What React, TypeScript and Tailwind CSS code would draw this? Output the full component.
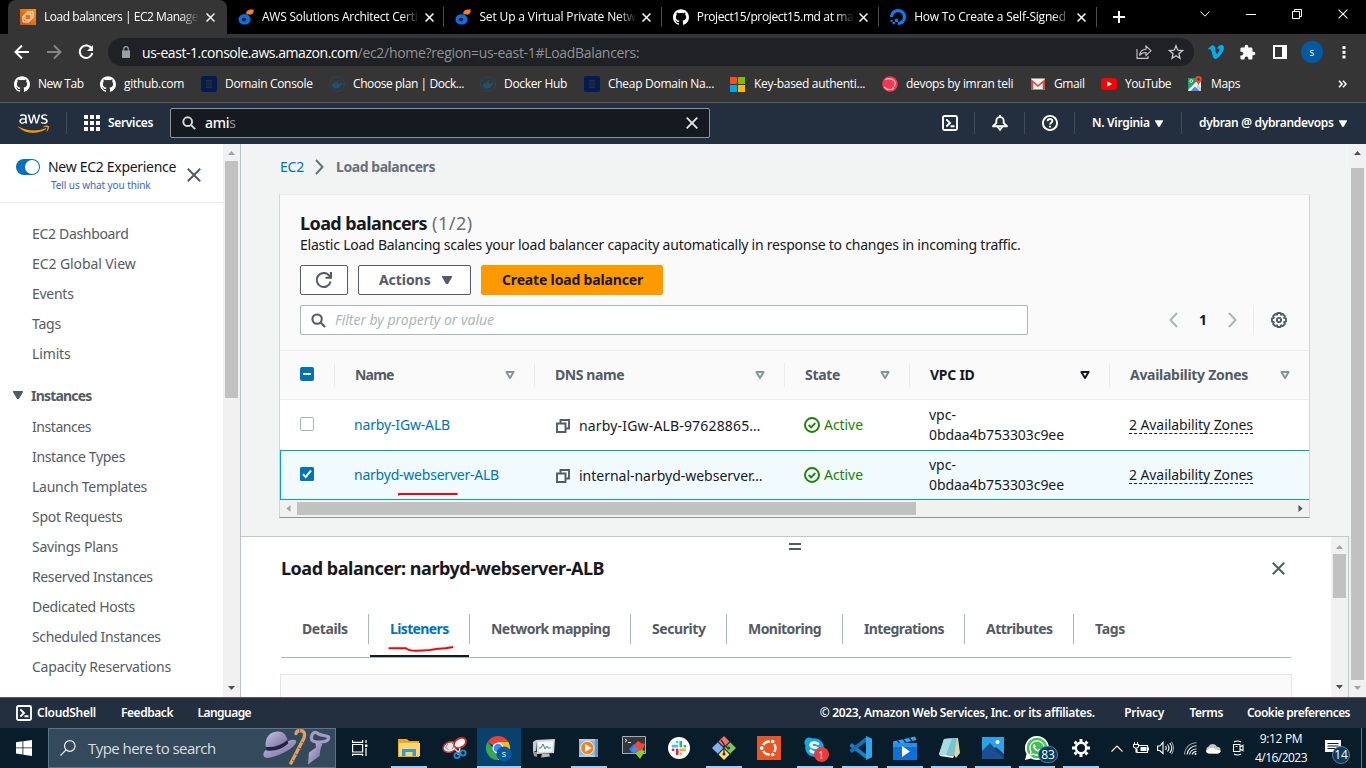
import { useLayoutEffect, useRef, type ReactNode } from "react";
import { SiGithub, SiDigitalocean, SiVimeo, SiDocker } from "react-icons/si";
import { FaAws, FaSkype, FaWhatsapp } from "react-icons/fa";
import { MdExtension } from "react-icons/md";

/* Text set to a fixed measure: the tracking is worked out from the natural width. */
function Fit({ w, className = "", children }: { w: number; className?: string; children: ReactNode }) {
  const ref = useRef<HTMLSpanElement>(null);
  useLayoutEffect(() => {
    const el = ref.current;
    if (!el) return;
    el.style.letterSpacing = "0px";
    const natural = el.getBoundingClientRect().width;
    const count = (el.textContent ?? "").length || 1;
    el.style.letterSpacing = `${(w - 0.4 - natural) / count}px`;
  }, [w]);
  return (
    <span ref={ref} className={`inline-block shrink-0 whitespace-nowrap ${className}`}>
      {children}
    </span>
  );
}

/* ---------- small glyphs ---------- */

function Cross({ className }: { className: string }) {
  return (
    <svg viewBox="0 0 12 12" className={`shrink-0 ${className}`} fill="none" stroke="currentColor">
      <path d="M.7.7l10.6 10.6M11.3.7L.7 11.3" />
    </svg>
  );
}

function Caret({ className }: { className: string }) {
  return (
    <svg viewBox="0 0 10 8" className={`shrink-0 ${className}`} fill="currentColor">
      <path d="M0 0h10v1L6 8H4L0 1z" />
    </svg>
  );
}

function SortCaret({ className }: { className: string }) {
  return (
    <svg viewBox="0 0 10 8" className={`h-2 w-2.5 shrink-0 ${className}`} fill="none" stroke="currentColor" strokeWidth="2">
      <path d="M1.4 1h7.2L5 7z" strokeLinejoin="round" />
    </svg>
  );
}

function Magnifier({ className }: { className: string }) {
  return (
    <svg viewBox="0 0 16 16" className={`shrink-0 ${className}`} fill="none" stroke="currentColor" strokeWidth="2.2">
      <circle cx="6.5" cy="6.5" r="5" />
      <path d="M10.2 10.2L15 15" />
    </svg>
  );
}

function ShellIcon() {
  return (
    <svg viewBox="0 0 16 16" className="size-4 shrink-0" fill="none" stroke="currentColor" strokeWidth="1.9">
      <rect x="1" y="1" width="14" height="14" rx="1.5" />
      <path d="M4.3 4.3L8 8l-3.7 3.5M8.5 11.3h4" />
    </svg>
  );
}

function Arrow({ dir, className }: { dir: "up" | "down" | "left" | "right"; className: string }) {
  const d = {
    up: "M0 6L3.5 2L7 6z",
    down: "M0 1h7L3.5 5z",
    left: "M5.5 0v7L1.500 3.5z",
    right: "M1.5 0v7L5.500 3.5z",
  }[dir];
  return (
    <svg viewBox="0 0 7 7" className={`size-[7px] shrink-0 ${className}`} fill="currentColor">
      <path d={d} />
    </svg>
  );
}

/* ---------- browser chrome ---------- */

function Ec2Fav() {
  return (
    <svg viewBox="0 0 16 16" className="size-4 shrink-0">
      <defs>
        <linearGradient id="ec2" x1="0" y1="1" x2="1" y2="0">
          <stop offset="0" stopColor="#c85412" />
          <stop offset="1" stopColor="#fc9415" />
        </linearGradient>
      </defs>
      <path d="M0 0h16v16H0z" fill="url(#ec2)" />
      <path d="M7 4.5V3h6v6h-1.500M5 5h6v6H5zM5 7H3v6h6v-2" fill="none" stroke="#fff" strokeWidth=".9" />
    </svg>
  );
}

function DropFav() {
  return (
    <svg viewBox="0 0 16 16" className="size-4 shrink-0">
      <path d="M6.500 5.200c3.400 0 6 2.200 6 5.200s-2.600 5.200-6 5.200S.5 13.400.5 10.400s2.600-5.200 6-5.200z" fill="#0b6fe0" />
      <ellipse cx="6" cy="10.600" rx="2.200" ry="1.800" fill="#02142d" />
      <path d="M8.300 5.200C7.800 2 10 .1 15.700.6c.2 3.800-1.400 5.300-4 5z" fill="#ff7a29" />
    </svg>
  );
}

const fade = "overflow-hidden [mask-image:linear-gradient(to_right,#000_88%,transparent)]";

function BrowserTab({ icon, title, w }: { icon: ReactNode; title: string; w: number }) {
  return (
    <div className="flex h-5 w-[217.400px] shrink-0 items-center border-r border-[#4c4c4c] pl-[11px]">
      {icon}
      <div className={`ml-2 w-[158px] text-white ${fade}`}>
        <Fit w={w}>{title}</Fit>
      </div>
      <Cross className="ml-[4.500px] size-[9px] stroke-2 text-white" />
    </div>
  );
}

function TabStrip() {
  return (
    <div className="flex h-[34px] items-start bg-black pl-2 text-[12px]">
      <div className="flex h-[34px] w-[219px] shrink-0 items-center rounded-t-lg bg-[#353535] pl-3">
        <Ec2Fav />
        <div className={`ml-2 w-[155px] text-white ${fade}`}>
          <Fit w={154.5}>Load balancers | EC2 Manage</Fit>
        </div>
        <Cross className="ml-[7px] size-[9px] stroke-2 text-white" />
      </div>
      <div className="flex h-[34px] items-center">
        <BrowserTab icon={<DropFav />} title="AWS Solutions Architect Certi" w={156} />
        <BrowserTab icon={<DropFav />} title="Set Up a Virtual Private Netw" w={157} />
        <BrowserTab icon={<SiGithub className="size-4 shrink-0 text-white" />} title="Project15/project15.md at ma" w={157} />
        <BrowserTab icon={<SiDigitalocean className="size-4 shrink-0 text-[#0080ff]" />} title="How To Create a Self-Signed" w={152} />
      </div>
      <div className="flex h-[34px] items-center pl-4 text-white">
        <svg viewBox="0 0 12 12" className="size-3" stroke="currentColor" strokeWidth="2">
          <path d="M6 0v12M0 6h12" />
        </svg>
      </div>
      <div className="ml-[75px] flex h-7 items-center text-white">
        <svg viewBox="0 0 10 6" className="h-1.5 w-2.5" fill="none" stroke="currentColor">
          <path d="M.4.5L5 5.200 9.600.5" />
        </svg>
        <div className="ml-9 h-px w-2.5 bg-white" />
        <svg viewBox="0 0 10 10" className="ml-[36px] size-2.5" fill="none" stroke="currentColor">
          <path d="M.5 2.500h7v7h-7zM2.500 2.500v-2h7v7h-2" />
        </svg>
        <Cross className="ml-[36px] size-2.5 [stroke-width:1.3]" />
      </div>
    </div>
  );
}

function Toolbar() {
  return (
    <div className="flex h-9 items-center bg-[#353535] pl-[14px] text-white">
      <svg viewBox="0 0 16 16" className="size-4" fill="none" stroke="currentColor" strokeWidth="2">
        <path d="M15 8H2M8 1.500L1.500 8 8 14.500" />
      </svg>
      <svg viewBox="0 0 16 16" className="ml-4 size-4 text-[#858585]" fill="none" stroke="currentColor" strokeWidth="2">
        <path d="M1 8h13M8 1.500L14.500 8 8 14.500" />
      </svg>
      <svg viewBox="0 0 16 16" className="ml-4 size-4" fill="none" stroke="currentColor" strokeWidth="2">
        <path d="M13.800 5A6.300 6.300 0 1 0 14.300 9" />
        <path d="M15 1v6H9z" fill="currentColor" stroke="none" />
      </svg>
      <div className="ml-[14px] flex h-7 w-[1086px] items-center rounded-full bg-[#202124] pl-[14px]">
        <svg viewBox="0 0 8 12" className="h-3 w-2" fill="#9aa0a6">
          <path d="M0 4.500h8V11q0 1-1 1H1q-1 0-1-1z" />
          <path d="M1.700 5V3a2.300 2.300 0 0 1 4.600 0v2" fill="none" stroke="#9aa0a6" strokeWidth="1.200" />
        </svg>
        <div className="ml-3 text-[14px]">
          <Fit w={216}>us-east-1.console.aws.amazon.com</Fit>
          <Fit w={282} className="text-[#8f9296]">/ec2/home?region=us-east-1#LoadBalancers:</Fit>
        </div>
        <svg viewBox="0 0 16 14" className="ml-auto h-[14px] w-4 text-[#c8c8c8]" fill="none" stroke="currentColor" strokeWidth="1.100">
          <path d="M1 4v9.400h11V11" />
          <path d="M3.500 10.500C4 6.500 6.500 4.300 10 4.200V1l5 4.800-5 4.700V7.500C7 7.400 5 8.300 3.500 10.500z" />
        </svg>
        <svg viewBox="0 0 16 16" className="mr-[10px] ml-4 size-4 text-[#c8c8c8]" fill="none" stroke="currentColor" strokeWidth="1.300">
          <path d="M8 1.800l1.800 4.400 4.700.4-3.600 3.100 1.100 4.600L8 11.800l-4 2.500 1.100-4.600L1.500 6.600l4.700-.4z" />
        </svg>
      </div>
      <SiVimeo className="ml-[14px] size-4 text-[#00adef]" />
      <MdExtension className="ml-[15px] size-[17px]" />
      <svg viewBox="0 0 14 14" className="ml-[17px] size-[14px]" fill="currentColor">
        <path fillRule="evenodd" d="M0 0h14v14H0zM2 2v10h7V2z" />
      </svg>
      <div className="ml-[14px] flex size-[22px] items-center justify-center rounded-full bg-[#0559a1] text-[10px]">s</div>
      <svg viewBox="0 0 4 14" className="ml-[19px] h-[14px] w-1" fill="currentColor">
        <path d="M.5 1h3v3h-3zM.5 5.700h3v3h-3zM.5 10.400h3v3h-3z" />
      </svg>
    </div>
  );
}

function DomainIcon() {
  return (
    <svg viewBox="0 0 16 16" className="size-4 shrink-0">
      <rect width="16" height="16" rx="2" fill="#041b50" />
      <path d="M5 4h6v8H5z" fill="#222f4c" />
      <path d="M4.500 6h7M4.500 8h7M4.500 10h7M6 3h4M6 13h4" stroke="#101d3c" />
    </svg>
  );
}

function DockerIcon() {
  return (
    <div className="flex size-4 shrink-0 items-center justify-center rounded-full border border-[#26475a]">
      <SiDocker className="size-[11px] text-[#1d5470]" />
    </div>
  );
}

function BookmarksBar() {
  return (
    <div className="flex h-[33px] items-center border-b border-[#5c5c5c] bg-[#353535] pb-1 pl-[14px] text-[12px] text-white">
      <div className="flex w-[86px] items-center gap-2">
        <SiGithub className="size-4 shrink-0" />
        <Fit w={46}>New Tab</Fit>
      </div>
      <div className="flex w-[101px] items-center gap-2">
        <SiGithub className="size-4 shrink-0" />
        <Fit w={60.5}>github.com</Fit>
      </div>
      <div className="flex w-32 items-center gap-2">
        <DomainIcon />
        <Fit w={88}>Domain Console</Fit>
      </div>
      <div className="flex w-[151px] items-center gap-2">
        <DockerIcon />
        <Fit w={111.5}>Choose plan | Dock...</Fit>
      </div>
      <div className="flex w-[104px] items-center gap-2">
        <DockerIcon />
        <Fit w={63.500}>Docker Hub</Fit>
      </div>
      <div className="flex w-[146px] items-center gap-2">
        <DomainIcon />
        <Fit w={106.500}>Cheap Domain Na...</Fit>
      </div>
      <div className="flex w-[152px] items-center gap-2">
        <svg viewBox="0 0 15 15" className="mr-px size-[15px] shrink-0">
          <path d="M0 0h7v7H0z" fill="#f25022" />
          <path d="M8 0h7v7H8z" fill="#7fba00" />
          <path d="M0 8h7v7H0z" fill="#00a4ef" />
          <path d="M8 8h7v7H8z" fill="#ffb900" />
        </svg>
        <Fit w={111.500}>Key-based authenti...</Fit>
      </div>
      <div className="flex w-[148px] items-center gap-2">
        <svg viewBox="0 0 16 16" className="size-4 shrink-0">
          <circle cx="8" cy="8" r="7.800" fill="#ee3a55" />
          <path d="M3 3.500q6-2 9.500 1.500 2 4-2 7.500M2 11q4 4.500 10 1.500" stroke="#f8a5b0" strokeWidth="1.300" fill="none" />
        </svg>
        <Fit w={107.500}>devops by imran teli</Fit>
      </div>
      <div className="flex w-[71px] items-center gap-2">
        <svg viewBox="0 0 16 16" className="size-4 shrink-0">
          <path d="M1 2.500h14v11H1z" fill="#f2f2f2" />
          <path d="M1 13.500V3l7 6 7-6v10.500h-2.200V7L8 11 3.200 7v6.500z" fill="#d54b3d" />
        </svg>
        <Fit w={31}>Gmail</Fit>
      </div>
      <div className="flex w-[86px] items-center gap-2">
        <svg viewBox="0 0 16 16" className="size-4 shrink-0">
          <rect y="2" width="16" height="12" rx="3" fill="#f00" />
          <path d="M6.300 5.300L11 8l-4.700 2.700z" fill="#fff" />
        </svg>
        <Fit w={46.5}>YouTube</Fit>
      </div>
      <div className="flex items-center gap-2">
        <svg viewBox="0 0 16 16" className="size-4 shrink-0">
          <path d="M1 2h13v13H1z" fill="#e6e6e6" />
          <path d="M1 2h9v5L1 15z" fill="#1fa463" />
          <path d="M1 14L11 4l3 3v8H1z" fill="#f5f5f5" />
          <path d="M3.500 15L8 10.500l4.500 4.500z" fill="#4889f4" />
          <path d="M11 9l3 3v3h-1L9.500 11z" fill="#c9c9c9" />
          <circle cx="4.300" cy="5" r="1.400" fill="none" stroke="#e8f5ee" strokeWidth=".9" />
          <path d="M11.500 0A3.300 3.300 0 0 1 14.800 3.400C14.800 6 11.800 6 11.500 10 11.200 6 8.200 6 8.200 3.400A3.300 3.300 0 0 1 11.500 0z" fill="#dc4b3e" />
          <circle cx="11.500" cy="3.300" r="1.200" fill="#7c221b" />
        </svg>
        <Fit w={29.500}>Maps</Fit>
      </div>
      <svg viewBox="0 0 9 8" className="ml-auto mr-[19px] h-2 w-[9px]" fill="none" stroke="currentColor" strokeWidth="1.600">
        <path d="M1 .8L4 4 1 7.200M5 .8L8 4 5 7.200" />
      </svg>
    </div>
  );
}

/* ---------- console header and footer ---------- */

function ConsoleHeader() {
  return (
    <div className="flex h-[41px] items-center bg-[#232f3e] pb-px pl-[18px] text-[12px] font-semibold text-white">
      <svg className="absolute size-0">
        <defs>
          <linearGradient id="aws" x1="0" y1="0" x2="0" y2="1">
            <stop offset=".61" stopColor="#fff" />
            <stop offset=".61" stopColor="#ff9900" />
          </linearGradient>
        </defs>
      </svg>
      <FaAws className="h-[25px] w-[31px] shrink-0 fill-[url(#aws)]" />
      <div className="ml-[17px] h-[22px] w-px bg-[#414d5c]" />
      <svg viewBox="0 0 16 16" className="ml-[17px] size-4" fill="currentColor">
        <path d="M0 0h4v4H0zM6 0h4v4H6zM12 0h4v4h-4zM0 6h4v4H0zM6 6h4v4H6zM12 6h4v4h-4zM0 12h4v4H0zM6 12h4v4H6zM12 12h4v4h-4z" />
      </svg>
      <Fit w={45.500} className="ml-2">Services</Fit>
      <div className="ml-[16.500px] flex h-[30px] w-[540px] items-center rounded-xs border border-[#879596] bg-[#16191f] pl-[11px] text-[14px] font-medium">
        <Magnifier className="size-3.5 text-[#d5dbdb]" />
        <Fit w={31} className="mb-px ml-[9.500px]">
          ami<span className="font-normal text-[#879596]">s</span>
        </Fit>
        <Cross className="mr-[11px] ml-auto size-3 text-[#e6eaea] [stroke-width:1.8]" />
      </div>
      <div className="ml-auto flex items-center">
        <ShellIcon />
        <div className="ml-4 h-[22px] w-px bg-[#414d5c]" />
        <svg viewBox="0 0 16 16" className="ml-[17px] size-4" fill="none" stroke="currentColor" strokeWidth="1.900">
          <path d="M8 0v2.200M1 11.200L4.300 8V5.800a3.700 3.700 0 0 1 7.400 0V8l3.300 3.200zM5.500 11.500L8 15l2.500-3.500" strokeLinejoin="round" />
        </svg>
        <div className="ml-4 h-[22px] w-px bg-[#414d5c]" />
        <svg viewBox="0 0 16 16" className="ml-[17px] size-4" fill="none" stroke="currentColor" strokeWidth="1.900">
          <circle cx="8" cy="8" r="7.100" />
          <path d="M5.600 6.300c0-3.200 4.800-3 4.800-.2 0 1.600-2.400 1.700-2.400 3.500M8 10.800v1.700" />
        </svg>
        <div className="ml-4 h-[22px] w-px bg-[#414d5c]" />
        <Fit w={58} className="ml-[17px]">N. Virginia</Fit>
        <Caret className="ml-[5.400px] h-[7px] w-2" />
        <div className="ml-[18px] h-[22px] w-px bg-[#414d5c]" />
        <Fit w={135} className="ml-[17px]">dybran @ dybrandevops</Fit>
        <Caret className="mr-[19px] ml-[5.400px] h-[7px] w-2" />
      </div>
    </div>
  );
}

function ConsoleFooter() {
  return (
    <div className="flex h-[31px] items-center border-t border-[#545b64] bg-[#232f3e] pl-4 text-[12px] font-semibold text-white">
      <ShellIcon />
      <Fit w={59.400} className="ml-[5px]">CloudShell</Fit>
      <Fit w={52.400} className="ml-[25px]">Feedback</Fit>
      <Fit w={54} className="ml-[24.500px]">Language</Fit>
      <div className="ml-auto flex items-center pr-4">
        <Fit w={275.400}>© 2023, Amazon Web Services, Inc. or its affiliates.</Fit>
        <Fit w={40} className="ml-[29.500px]">Privacy</Fit>
        <Fit w={34} className="ml-[25.500px]">Terms</Fit>
        <Fit w={103.400} className="ml-6">Cookie preferences</Fit>
      </div>
    </div>
  );
}

/* ---------- sidebar ---------- */

const topLinks: [string, number][] = [
  ["EC2 Dashboard", 97],
  ["EC2 Global View", 104],
  ["Events", 42],
  ["Tags", 29.4],
  ["Limits", 39],
];

const instanceLinks: [string, number][] = [
  ["Instances", 59.4],
  ["Instance Types", 93.4],
  ["Launch Templates", 115.4],
  ["Spot Requests", 91],
  ["Savings Plans", 86.4],
  ["Reserved Instances", 121],
  ["Dedicated Hosts", 103.4],
  ["Scheduled Instances", 129],
  ["Capacity Reservations", 139.4],
];

function Sidebar() {
  return (
    <div className="flex h-full w-[223px] shrink-0 flex-col bg-white text-[14px] text-[#545b64]">
      <div className="flex h-[59px] shrink-0 items-start border-b border-[#eaeded] pl-4">
        <div className="mt-[15px] flex h-4 w-6 items-center justify-end rounded-full bg-[#0073bb] pr-px">
          <div className="size-3.5 rounded-full bg-white" />
        </div>
        <div className="ml-2 flex w-[139px] flex-col items-start pt-[13px]">
          <Fit w={128.5} className="leading-5 text-[#16191f]">New EC2 Experience</Fit>
          <Fit w={100} className="ml-[3px] text-[10px] leading-4 text-[#3b66be]">Tell us what you think</Fit>
        </div>
        <Cross className="mt-[24px] size-[14px] [stroke-width:1.7]" />
      </div>
      <div className="flex flex-col pt-[15px] pl-8">
        {topLinks.map(([t, w]) => (
          <div key={t} className="flex h-[30px] items-center">
            <Fit w={w}>{t}</Fit>
          </div>
        ))}
      </div>
      <div className="mt-[11px] flex h-8 items-center pl-[13px] font-bold">
        <Caret className="h-2 w-2.5" />
        <Fit w={61} className="ml-2">Instances</Fit>
      </div>
      <div className="flex flex-col pl-8">
        {instanceLinks.map(([t, w]) => (
          <div key={t} className="flex h-[30px] items-center">
            <Fit w={w}>{t}</Fit>
          </div>
        ))}
      </div>
    </div>
  );
}

/* ---------- load balancer table ---------- */

const columns = [
  { title: "Name", w: 39, cell: "w-[200px]", sorted: false },
  { title: "DNS name", w: 69.5, cell: "w-[250px]", sorted: false },
  { title: "State", w: 35.5, cell: "w-[125px]", sorted: false },
  { title: "VPC ID", w: 45, cell: "w-[200px]", sorted: true },
  { title: "Availability Zones", w: 118.5, cell: "w-[200px]", sorted: false },
];

const rows = [
  { name: "narby-IGw-ALB", nameW: 96.400, dns: "narby-IGw-ALB-97628865…", dnsW: 182, on: false },
  { name: "narbyd-webserver-ALB", nameW: 145.400, dns: "internal-narbyd-webserver…", dnsW: 184, on: true },
];

function TableRow({ row }: { row: (typeof rows)[number] }) {
  return (
    <div
      className={`relative flex h-[50px] items-center ${
        row.on ? "border border-r-0 border-[#00a1c9] bg-[#f1faff] pl-[19px]" : "bg-white pl-5"
      }`}
    >
      {row.on ? (
        <svg viewBox="0 0 14 14" className="mb-0.5 size-3.5 shrink-0">
          <rect width="14" height="14" rx="1.500" fill="#0073bb" />
          <path d="M3 7.300l2.700 2.800L11 3.500" fill="none" stroke="#fff" strokeWidth="2" />
        </svg>
      ) : (
        <div className="mb-0.5 size-3.5 shrink-0 rounded-xs border border-[#aab7b8] bg-white" />
      )}
      <div className="w-[222px] shrink-0 pb-px pl-10 text-[#0073bb]">
        <Fit w={row.nameW}>{row.name}</Fit>
      </div>
      <div className="flex w-[248px] shrink-0 items-center pl-5">
        <svg viewBox="0 0 14 14" className="mt-0.5 size-3.5 shrink-0" fill="none" stroke="#545b64" strokeWidth="1.900">
          <path d="M1 4.500h8.500V13H1zM4.500 4V1H13v8.500H10" />
        </svg>
        <Fit w={row.dnsW} className="ml-[9px]">{row.dns}</Fit>
      </div>
      <div className="flex w-[125px] shrink-0 items-center pl-5 text-[#1d8102]">
        <svg viewBox="0 0 16 16" className="size-4 shrink-0" fill="none" stroke="currentColor" strokeWidth="1.900">
          <circle cx="8" cy="8" r="7" />
          <path d="M4.700 8l2.400 2.400 4.200-4.200" />
        </svg>
        <Fit w={39.4} className="mb-px ml-1">Active</Fit>
      </div>
      <div className="flex w-[200px] shrink-0 flex-col items-start pl-5 leading-5">
        <Fit w={27.4}>vpc-</Fit>
        <Fit w={135.400}>0bdaa4b753303c9ee</Fit>
      </div>
      <div className="pb-px pl-5">
        <Fit w={124.400} className="border-b border-dashed border-[#16191f] leading-[17px]">2 Availability Zones</Fit>
      </div>
      {row.on && (
        <svg viewBox="0 0 60 4" className="absolute top-[41px] left-[117px] h-1 w-[60px]" fill="none" stroke="#fa0008" strokeWidth="2">
          <path d="M.7 3.400V2H59.500" strokeLinejoin="round" />
        </svg>
      )}
    </div>
  );
}

function LoadBalancers() {
  return (
    <div className="mr-[39px] ml-[38px] border border-t-[#eaeded] border-r-[#d0d6d6] border-b-[#879596] border-l-[#d0d6d6] bg-[#fafafa] text-[14px] text-[#16191f]">
      <div className="px-5 pt-4">
        <div className="flex h-6 items-center text-[18px]">
          <Fit w={127.400} className="font-bold">Load balancers</Fit>
          <Fit w={41} className="ml-[5px] text-[#687078]">(1/2)</Fit>
        </div>
        <div className="flex h-[19px] items-center">
          <Fit w={721}>Elastic Load Balancing scales your load balancer capacity automatically in response to changes in incoming traffic.</Fit>
        </div>
        <div className="mt-[11px] flex gap-2.5 font-bold text-[#545b64]">
          <div className="flex h-[30px] w-12 items-center justify-center rounded-xs border border-[#545b64] bg-white">
            <svg viewBox="0 0 16 16" className="size-4" fill="none" stroke="currentColor" strokeWidth="2">
              <path d="M14.600 9.500A7 7 0 1 1 13 3.300L14.500 5M15 0v5.800H9.500" />
            </svg>
          </div>
          <div className="flex h-[30px] w-[113px] items-center rounded-xs border border-[#545b64] bg-white pl-5">
            <Fit w={52} className="mb-0.5">Actions</Fit>
            <Caret className="ml-[11px] h-2 w-2.5" />
          </div>
          <div className="flex h-[30px] w-[182px] items-center rounded-xs bg-[#ff9900] pl-[21px] text-[#16191f]">
            <Fit w={141.400} className="mb-0.5">Create load balancer</Fit>
          </div>
        </div>
        <div className="mt-2.5 flex items-center">
          <div className="flex h-[30px] w-[728px] items-center rounded-xs border border-[#aab7b8] bg-white pl-2.5">
            <Magnifier className="size-[15px] text-[#545b64]" />
            <Fit w={159.400} className="mb-0.5 ml-[9px] text-[#aab7b8] italic">Filter by property or value</Fit>
          </div>
          <svg viewBox="0 0 9 16" className="ml-[141px] h-4 w-[9px]" fill="none" stroke="#aab7b8" strokeWidth="2">
            <path d="M8 1L1.500 8 8 15" />
          </svg>
          <span className="mb-0.5 ml-[21px] w-2 font-bold">1</span>
          <svg viewBox="0 0 9 16" className="ml-[21px] h-4 w-[9px]" fill="none" stroke="#aab7b8" strokeWidth="2">
            <path d="M1 1l6.500 7L1 15" />
          </svg>
          <div className="ml-4 h-[30px] w-px bg-[#eaeded]" />
          <svg viewBox="0 0 16 16" className="ml-[17px] size-4" fill="none" stroke="#545b64" strokeWidth="1.900">
            <path d="M6.500 1h3l.5 1.700 1.700-.8 2.200 2.200-.8 1.700L15 6.400v3.200l-1.900.6.8 1.700-2.200 2.200-1.700-.8L9.500 15h-3L6 13.300l-1.700.8-2.200-2.200.8-1.700L1 9.600V6.400l1.900-.6-.8-1.700 2.200-2.200 1.700.8z" strokeLinejoin="round" />
            <circle cx="8" cy="8" r="2.100" />
          </svg>
        </div>
      </div>
      <div className="mt-[15px] flex h-[50px] items-center border-y border-[#eaeded] pl-5 font-bold text-[#545b64]">
        <div className="mb-0.5 flex size-3.5 shrink-0 items-center justify-center rounded-xs bg-[#0073bb]">
          <div className="h-0.5 w-2 bg-white" />
        </div>
        <div className="ml-5 flex">
          {columns.map((c) => (
            <div key={c.title} className={`flex h-6 shrink-0 items-center justify-between border-l border-[#eaeded] pr-[19px] pl-5 ${c.cell} ${c.sorted ? "text-[#16191f]" : ""}`}>
              <Fit w={c.w} className="mb-0.5">{c.title}</Fit>
              <SortCaret className={c.sorted ? "text-[#16191f]" : "text-[#879596]"} />
            </div>
          ))}
        </div>
      </div>
      {rows.map((r) => (
        <TableRow key={r.name} row={r} />
      ))}
      <div className="flex h-[17px] items-center bg-[#f1f1f1] pr-[5px] pl-[5px]">
        <Arrow dir="left" className="text-[#a3a3a3]" />
        <div className="ml-[5px] h-[13px] w-[619px] bg-[#c1c1c1]" />
        <Arrow dir="right" className="ml-auto text-[#505050]" />
      </div>
    </div>
  );
}

/* ---------- split panel ---------- */

const panelTabs = [
  { t: "Details", w: 46, cell: "w-[88px]" },
  { t: "Listeners", w: 59, cell: "w-[101px]" },
  { t: "Network mapping", w: 119.4, cell: "w-[161px]" },
  { t: "Security", w: 54, cell: "w-24" },
  { t: "Monitoring", w: 73.4, cell: "w-[116px]" },
  { t: "Integrations", w: 80.4, cell: "w-[122px]" },
  { t: "Attributes", w: 67, cell: "w-[109px]" },
  { t: "Tags", w: 30.4, cell: "w-[60px]" },
];

function SplitPanel() {
  return (
    <div className="mt-[18px] flex min-h-0 flex-1 border-t border-r border-[#c0c9c9] bg-white text-[14px] text-[#16191f]">
      <div className="flex flex-1 flex-col pr-10 pl-10">
        <div className="flex justify-center pt-1.5 pl-[18px]">
          <div className="h-[7px] w-3 border-y-2 border-[#545b64]" />
        </div>
        <div className="mt-[3px] flex h-8 items-center justify-between pr-1.5">
          <Fit w={323.4} className="mb-0.5 text-[18px] font-bold">Load balancer: narbyd-webserver-ALB</Fit>
          <Cross className="mb-px size-[13px] text-[#545b64] [stroke-width:1.8]" />
        </div>
        <div className="mt-[29px] flex h-[44px] shrink-0 items-start border-b border-[#aab7b8] font-bold text-[#545b64]">
          {panelTabs.map((p, i) => (
            <div
              key={p.t}
              className={`relative flex h-[30px] items-center pl-[21px] ${p.cell} ${i < 7 ? "border-r border-[#aab7b8]" : ""} ${
                i === 1 ? "text-[#0073bb]" : ""
              }`}
            >
              <Fit w={p.w} className="mb-0.5">{p.t}</Fit>
              {i === 1 && (
                <>
                  <svg viewBox="0 0 66 6" className="absolute top-[32px] left-[19px] h-1.5 w-[66px]" fill="none" stroke="#fa0008" strokeWidth="1.900">
                    <path d="M.5 2.300h17.500q2 2.200 10 2.400 14 0 22-2 8 0 15-1.700" />
                  </svg>
                  <div className="absolute top-[41px] left-px h-0.5 w-[99px] bg-[#16191f]" />
                </>
              )}
            </div>
          ))}
        </div>
        <div className="mt-4 -mr-px -ml-px flex-1 border border-b-0 border-[#e2e6e6] bg-[#fafafa]" />
      </div>
      <div className="flex w-[17px] flex-col items-center bg-[#f1f1f1] py-1.5">
        <Arrow dir="up" className="text-[#a3a3a3]" />
        <div className="mt-1 h-11 w-[13px] bg-[#c1c1c1]" />
        <Arrow dir="down" className="mt-auto text-[#505050]" />
      </div>
    </div>
  );
}

/* ---------- taskbar ---------- */

function Task({ w, on = false, active = false, children }: { w: string; on?: boolean; active?: boolean; children: ReactNode }) {
  return (
    <div className={`relative flex h-10 shrink-0 items-center justify-center ${w} ${active ? "bg-[#07416e]" : ""}`}>
      {children}
      {on && <div className={`absolute bottom-0 h-0.5 bg-[#9bcdf8] ${active ? "w-full" : "w-9"}`} />}
    </div>
  );
}

function Taskbar() {
  return (
    <div className="flex h-10 items-center bg-[#081c2a] text-white">
      <div className="flex w-12 justify-center">
        <svg viewBox="0 0 16 16" className="size-4" fill="#fff">
          <path d="M0 2.200L6.500 1.300v6.200H0zM7.300 1.200L16 0v7.500H7.300zM0 8.300h6.500v6.200L0 13.600zM7.300 8.300H16V16l-8.700-1.200z" />
        </svg>
      </div>
      <div className="flex h-10 w-72 items-center border border-[#5d7485] bg-[#34495b] pl-[11px]">
        <svg viewBox="0 0 16 16" className="size-4" fill="none" stroke="#eee" strokeWidth="1.200">
          <circle cx="9.800" cy="6" r="5.300" />
          <path d="M6 9.800L.5 15.500" />
        </svg>
        <Fit w={128} className="ml-3 text-[15px] text-[#d9dfe4]">Type here to search</Fit>
        <svg viewBox="0 0 68 38" className="ml-[47px] h-[38px] w-[68px]">
          <defs>
            <linearGradient id="hat" x1="0" y1="0" x2="1" y2="1">
              <stop offset="0" stopColor="#c9c0e6" />
              <stop offset="1" stopColor="#6f6796" />
            </linearGradient>
          </defs>
          <path d="M.5 26C0 22 4 20 8 18l20-7c4-1 6 0 5 3-4 7-20 14-28 15-3 0-4.500-1-4.500-3z" fill="url(#hat)" />
          <path d="M3 19C1 10 6 3 14 2.500 21 2 24 7 25 13q-8 9-22 6z" fill="url(#hat)" />
          <path d="M3 18q12 1 21.500-7l.8 3.500Q16 23 3.500 21.500z" fill="#28243f" />
          <path d="M28 34L41 9q2-7-3.500-7.500-4 0-4.500 3" fill="none" stroke="#dca264" strokeWidth="3.400" strokeLinecap="round" />
          <path d="M29 31l3 1.500M32 25l3 1.500M35.500 19l3 1.500M38.500 13l3 1.500M37 0l-.5 3" stroke="#8b5526" strokeWidth="1" />
          <path d="M48.500 8c1-5 4-6 7-3 4 2 8 1 10 3 1 4-4 5-9 5-5 .5-9-1-8-5z" fill="none" stroke="#a39dc6" strokeWidth="3.200" />
          <path d="M52.500 13l7 1.500-2 5.500-1 7-11.500 8.500 1-12 7-5z" fill="url(#hat)" />
        </svg>
      </div>
      <Task w="w-12">
        <svg viewBox="0 0 16 16" className="size-4" fill="none" stroke="#fff" strokeWidth="1.200">
          <path d="M.6 4.500h10v7.500H.6zM.6 0v2.300h10V0M.6 16v-1.700h10V16M14 0v3M14 8v8" />
          <path d="M13 4.500h2.400v2.400H13z" fill="#fff" stroke="none" />
        </svg>
      </Task>
      <Task w="w-[49px]" on>
        <svg viewBox="0 0 22 18" className="h-[18px] w-[22px]">
          <path d="M0 0h9l2 2h10v16H0z" fill="#e6a92a" />
          <path d="M1 4h21v13H1z" fill="#ffd767" />
          <path d="M4 17v-7h14v7h-3.500v-4h-7v4z" fill="#3a96dd" />
        </svg>
      </Task>
      <Task w="w-11">
        <svg viewBox="0 0 26 24" className="h-6 w-[26px]" fill="none">
          <ellipse cx="8" cy="11" rx="7" ry="5" transform="rotate(-20 8 11)" fill="#e8e8e8" stroke="#c33" strokeWidth="1.500" />
          <ellipse cx="18" cy="7" rx="6.500" ry="4.500" transform="rotate(-30 18 7)" fill="#f7f7f7" stroke="#d92b2b" strokeWidth="1.800" />
          <path d="M6 8l-2.500 3.500 3 2M10 7l2.500 2.500L10 13" stroke="#888" />
          <path d="M13 13l6 6M18 12l-2 7" stroke="#ddd" strokeWidth="1.500" />
          <circle cx="15" cy="19.500" r="2.600" stroke="#1e8fd2" strokeWidth="1.800" />
          <circle cx="21" cy="17" r="2.600" stroke="#1e8fd2" strokeWidth="1.800" />
        </svg>
      </Task>
      <Task w="w-11" on active>
        <svg viewBox="0 0 26 26" className="mt-0.5 size-[26px]">
          <path d="M12 12L1.600 6A12 12 0 0 1 22.400 6z" fill="#ea4335" />
          <path d="M12 12h-5L1.600 6A12 12 0 0 0 12 24l5-9z" fill="#34a853" />
          <path d="M12 12V6h10.400A12 12 0 0 1 12 24z" fill="#fbbc05" />
          <circle cx="12" cy="12" r="5.500" fill="#fff" />
          <circle cx="12" cy="12" r="4.300" fill="#4285f4" />
          <circle cx="18" cy="18" r="7.600" fill="#0559a1" />
          <text x="18" y="21" textAnchor="middle" className="text-[9px]" fill="#fff">s</text>
        </svg>
      </Task>
      <Task w="w-[46px]">
        <svg viewBox="0 0 24 24" className="size-6">
          <path d="M1 6l3-2v11l-3 1z" fill="#c9c9c9" />
          <path d="M4 4l19-1-1 14-17 1z" fill="#d4d7da" />
          <path d="M6 6l15-.8-.8 10.300L7 16z" fill="#f5fafd" />
          <path d="M7 12h2l2-4 2 5 2-3 1 2h3" fill="none" stroke="#3b87bd" />
          <path d="M10 18l7-.5 1 3-9 1z" fill="#b9bcbf" />
          <path d="M1 16h4v5l-3-1z" fill="#999" />
        </svg>
      </Task>
      <Task w="w-11" on>
        <svg viewBox="0 0 20 20" className="size-5">
          <path d="M14 1h5v18h-5z" fill="#5a9bcb" />
          <path d="M0 1h16v18H0z" fill="#86b9dd" />
          <path d="M0 1h16v2H0zM0 17h16v2H0z" fill="#a9cfe9" />
          <circle cx="8.300" cy="10" r="6.700" fill="#f58220" stroke="#fff" strokeWidth=".8" />
          <path d="M6 6l6.500 4L6 14z" fill="#fff" />
        </svg>
      </Task>
      <Task w="w-[45px]">
        <svg viewBox="0 0 24 24" className="size-6">
          <path d="M.5.500h23v17H.5z" fill="#33383b" stroke="#a8acae" />
          <path d="M3 3l2 1.500L3 6M6 6.500h3" stroke="#eee" fill="none" />
          <path d="M7 13l5-5 3 3-5 6z" fill="#2f7de0" />
          <path d="M12 9l4-4 3 2 4 1-3 7-4 2-3-3z" fill="#f0483a" />
          <path d="M9 14l4-4 3 4-4 4z" fill="#3b8ff0" />
          <path d="M13 17l4-2 3-1 3 1-5 8z" fill="#8ad024" />
        </svg>
      </Task>
      <Task w="w-[46px]">
        <div className="flex size-[22px] items-center justify-center rounded-full bg-white">
          <svg viewBox="0 0 16 16" className="size-4" strokeWidth="2.700" strokeLinecap="round" fill="none">
            <path d="M2 6.200h4M6.200 2v.1" stroke="#36c5f0" />
            <path d="M9.800 2v4.200M14 6.200h-.1" stroke="#2eb67d" />
            <path d="M6.200 9.800V14M2 9.800h.1" stroke="#e01e5a" />
            <path d="M9.800 9.800H14M9.800 14v-.1" stroke="#ecb22e" />
          </svg>
        </div>
      </Task>
      <Task w="w-11" on>
        <svg viewBox="0 0 24 24" className="size-6">
          <path d="M12 0l5.500 5.500L12 11 6.500 5.500z" fill="#f0726a" />
          <path d="M5.800 6.200L11.500 12l-5.700 5.800L0 12z" fill="#80b0f5" />
          <path d="M18.200 6.200L24 12l-5.800 5.800L12.500 12z" fill="#7fc45f" />
          <path d="M12 12.800l5.500 5.600L12 24l-5.500-5.600z" fill="#f7dd6d" />
          <path d="M9 4l3 4v9M12 9l4 3" stroke="#333" strokeWidth="1.300" fill="none" />
          <circle cx="12" cy="18" r="1.500" fill="#333" />
          <circle cx="16.500" cy="12" r="1.500" fill="#333" />
        </svg>
      </Task>
      <Task w="w-[46px]">
        <svg viewBox="0 0 24 24" className="size-6">
          <path d="M0 0h24v24H0z" fill="#e95420" />
          <circle cx="12" cy="12" r="6.500" fill="none" stroke="#fff" strokeWidth="2.400" />
          <g fill="#fff" stroke="#e95420" strokeWidth="1.300">
            <circle cx="4.700" cy="12" r="2.500" />
            <circle cx="15.700" cy="5.500" r="2.500" />
            <circle cx="15.700" cy="18.500" r="2.500" />
          </g>
        </svg>
      </Task>
      <Task w="w-[45px]" on>
        <div className="relative size-6">
          <div className="absolute top-1 left-[3px] size-4 rounded-full bg-white" />
          <FaSkype className="absolute size-[23px] text-[#13a9e8]" />
          <div className="absolute top-[11px] left-[11px] flex size-[15px] items-center justify-center rounded-full bg-[#ee3b36] text-[10px] leading-none">1</div>
        </div>
      </Task>
      <Task w="w-[45px]" on>
        <svg viewBox="0 0 24 24" className="size-6" fill="none">
          <path d="M2.500 8.500L18.500 21" stroke="#1681cc" strokeWidth="3.600" strokeLinejoin="round" />
          <path d="M2.500 15.500L18.500 3" stroke="#1070b8" strokeWidth="3.600" strokeLinejoin="round" />
          <path d="M18 0l6 2.800v18.400L18 24z" fill="#30a5ec" />
        </svg>
      </Task>
      <Task w="w-[45px]" on>
        <svg viewBox="0 0 24 24" className="size-6">
          <path d="M0 5.500L22 .5l1.500 3.500L1 9z" fill="#35a7f0" />
          <path d="M4 4l3 3.500M10 3l3 3.500M16 1.500l3 3.500" stroke="#0c3a66" strokeWidth="1.500" />
          <path d="M0 7h24v17H0z" fill="#0f6fd4" />
          <path d="M0 7h24v4H0z" fill="#2390ea" />
          <path d="M9 10l8 5.500L9 21z" fill="#fff" />
        </svg>
      </Task>
      <Task w="w-11" on>
        <svg viewBox="0 0 24 24" className="size-6">
          <path d="M7 3l14-1 2 15-4 5z" fill="#dcd3a6" />
          <path d="M7 3l13-1-3 18-15-2z" fill="#7ec1cf" />
          <path d="M7 3l8-.6L9 19l-7-1z" fill="#a9dbe4" />
          <path d="M2 18l15 2-1 2L3 20z" fill="#e8f0f0" />
        </svg>
      </Task>
      <Task w="w-11" on>
        <svg viewBox="0 0 22 22" className="size-[22px]">
          <path d="M0 0h22v22H0z" fill="#2ba3e9" />
          <path d="M0 22V14L8 6l14 15v1z" fill="#1b4f92" />
          <path d="M12 12l2-2 8 7v5z" fill="#173f7b" />
          <circle cx="15.500" cy="5" r="2" fill="#fff" />
        </svg>
      </Task>
      <Task w="w-11" on>
        <div className="relative size-6">
          <svg viewBox="0 0 24 24" className="absolute size-6">
            <path d="M12 0a12 12 0 1 1-6 22.400L0 24l1.600-6A12 12 0 0 1 12 0z" fill="#fff" />
            <circle cx="12" cy="12" r="10.300" fill="#40c351" />
          </svg>
          <FaWhatsapp className="absolute top-[3px] left-[3px] size-[18px]" />
          <div className="absolute top-2.5 left-[13px] flex h-[17px] w-5 items-center justify-center rounded-full border border-[#5a7f9c] bg-[#0b3a63] text-[12px] leading-none">83</div>
        </div>
      </Task>
      <Task w="w-11" on>
        <svg viewBox="0 0 18 18" className="size-[18px]" fill="none" stroke="#fff">
          <circle cx="9" cy="9" r="5.200" strokeWidth="2.400" />
          <path d="M9 0v3M9 15v3M0 9h3M15 9h3M2.600 2.600l2.100 2.100M13.300 13.300l2.100 2.100M2.600 15.400l2.100-2.100M13.300 4.700l2.100-2.100" strokeWidth="3" />
        </svg>
      </Task>
      <div className="ml-auto flex h-10 items-center">
        <svg viewBox="0 0 12 7" className="h-[7px] w-3" fill="none" stroke="#fff" strokeWidth="1.200">
          <path d="M.5 6.500L6 1l5.500 5.500" />
        </svg>
        <svg viewBox="0 0 16 12" className="ml-2.5 h-3 w-4" fill="none" stroke="#fff" strokeWidth="1.100">
          <path d="M5 3.500h9.500v7H4V7M15.500 5.500v3M1.500 0v2M4.500 0v2M.5 2.500h5V5l-1.500 1H2L.5 5zM3 6v4h1" />
          <path d="M7.500 5h6v4h-6z" fill="#fff" stroke="none" />
        </svg>
        <svg viewBox="0 0 17 14" className="ml-2 h-3.5 w-[17px]" fill="none" stroke="#fff" strokeWidth="1.100">
          <path d="M.6 5h2.200L6 1.500v11L2.800 9.500H.6zM8.500 5q1.500 2 0 4M10.500 3.500q3 3.500 0 7M12.800 2q4 5 0 10" />
          <path d="M14.500.8q4 6.200 0 12.400" stroke="#8b98a2" />
        </svg>
        <svg viewBox="0 0 13 13" className="ml-[10px] size-[13px]" fill="none" stroke="#fff" strokeWidth="1.100">
          <path d="M.5 12.500A12 12 0 0 1 12.500.8" stroke="#9ba6ae" />
          <path d="M3 12.500A9.500 9.500 0 0 1 12.500 3.800M5.500 12.500a7 7 0 0 1 7-5.500M8 12.500a4.500 4.500 0 0 1 4.500-3" />
          <circle cx="11.500" cy="12" r="1" fill="#fff" stroke="none" />
        </svg>
        <svg viewBox="0 0 16 11" className="ml-2 h-[11px] w-4">
          <path d="M4 10.500a3.700 3.700 0 0 1-.5-7A4.800 4.800 0 0 1 12 3.800a3.400 3.400 0 0 1 1 6.700z" fill="#c7c7c7" />
          <path d="M1 8q5-5 8-2.500L15.500 8q0 2.500-3 2.500H3.500Q1 10 1 8z" fill="#fff" />
        </svg>
        <svg viewBox="0 0 12 16" className="ml-[11px] h-4 w-3" fill="none" stroke="#fff" strokeWidth="1.100">
          <path d="M1.500 4.500h6.500v7H1.500zM8 7l3-1.800v5.600L8 9M3.500 6.500h2M2 2q3.500-2 7 0M2 14q3.500 2 7 0" />
        </svg>
        <div className="ml-2.5 flex w-[54px] flex-col items-center text-[12px] leading-[19px]">
          <Fit w={43}>9:12 PM</Fit>
          <Fit w={52.5}>4/16/2023</Fit>
        </div>
        <div className="relative ml-[17px] h-6 w-[26px]">
          <svg viewBox="0 0 16 16" className="absolute top-1 left-0 size-4">
            <path d="M0 0h16v12h-4v3.500L8.500 12H0z" fill="#fff" />
            <path d="M2.500 3.500h11M2.500 6h11M2.500 8.500h8" stroke="#081c2a" />
          </svg>
          <div className="absolute top-2.5 left-[7px] flex size-[18px] items-center justify-center rounded-full border border-[#5a7f9c] bg-[#0b3a63] text-[12px] leading-none">14</div>
        </div>
        <div className="mr-1 ml-2.5 h-10 w-px bg-[#5d7485]" />
      </div>
    </div>
  );
}

/* ---------- page ---------- */

export default function App() {
  return (
    <div className="flex h-[768px] w-[1366px] flex-col overflow-hidden font-['Noto_Sans',sans-serif]">
      <div className="font-['Open_Sans','Noto_Sans',sans-serif]">
        <TabStrip />
        <Toolbar />
        <BookmarksBar />
      </div>
      <ConsoleHeader />
      <div className="flex min-h-0 flex-1 bg-[#f2f3f3]">
        <Sidebar />
        <div className="flex w-[18px] shrink-0 flex-col items-center border-r border-[#b9c2c4] bg-[#f1f1f1] py-[5px]">
          <Arrow dir="up" className="text-[#a3a3a3]" />
          <div className="mt-[5px] h-[237px] w-[13px] bg-[#c1c1c1]" />
          <Arrow dir="down" className="mt-auto text-[#505050]" />
        </div>
        <div className="flex w-[1108px] shrink-0 flex-col">
          <div className="flex h-[50px] shrink-0 items-center pb-[5px] pl-[39px] text-[14px]">
            <Fit w={24.4} className="text-[#0073bb]">EC2</Fit>
            <svg viewBox="0 0 9 16" className="ml-[11px] h-4 w-[9px]" fill="none" stroke="#687078" strokeWidth="2">
              <path d="M1 1l6.500 7L1 15" />
            </svg>
            <Fit w={99.4} className="ml-3 font-bold text-[#687078]">Load balancers</Fit>
          </div>
          <LoadBalancers />
          <SplitPanel />
        </div>
        <div className="flex w-[17px] shrink-0 flex-col items-center bg-[#f1f1f1] py-[5px]">
          <Arrow dir="up" className="text-[#505050]" />
          <div className="mt-3 h-[512px] w-[13px] bg-[#c1c1c1]" />
          <Arrow dir="down" className="mt-auto text-[#a3a3a3]" />
        </div>
      </div>
      <ConsoleFooter />
      <div className="font-['Open_Sans','Noto_Sans',sans-serif]">
        <Taskbar />
      </div>
    </div>
  );
}
